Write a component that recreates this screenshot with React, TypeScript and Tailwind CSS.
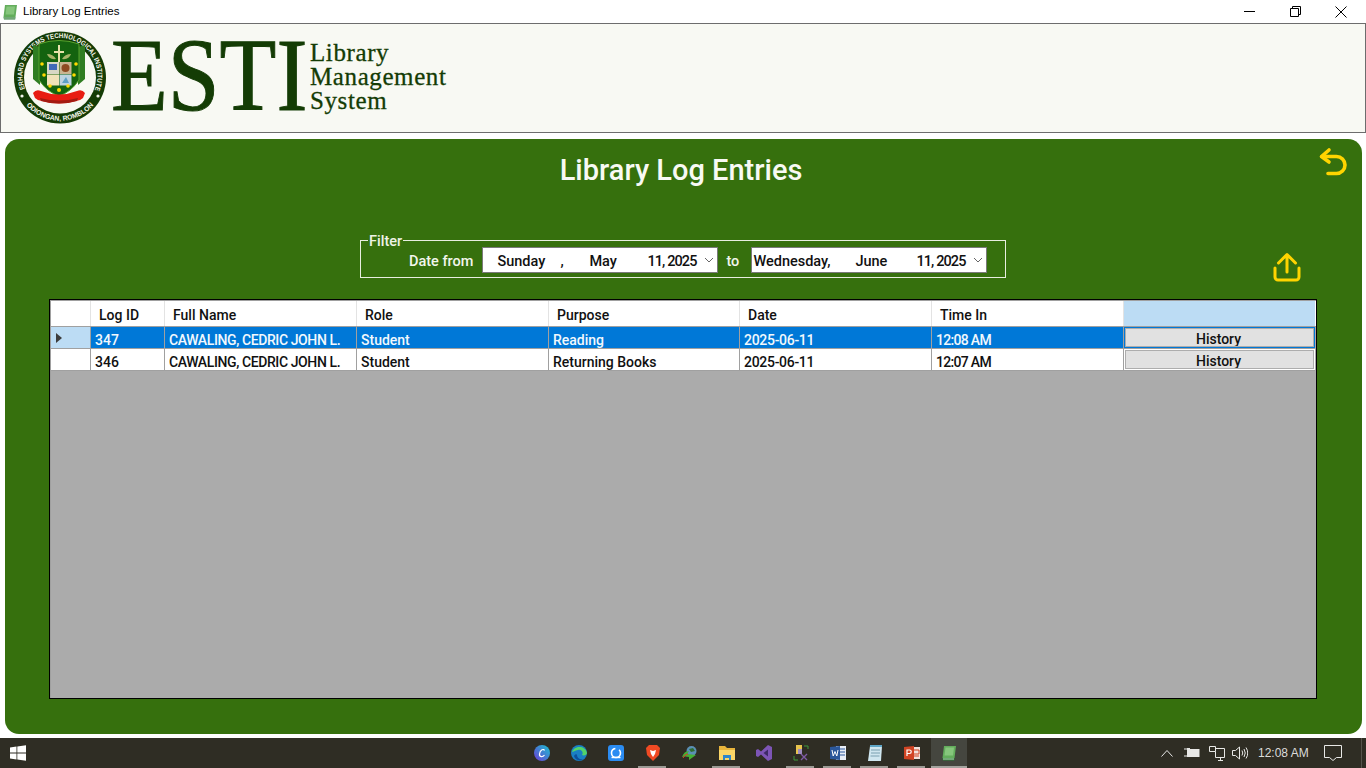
const COLUMNS = ["Log ID", "Full Name", "Role", "Purpose", "Date", "Time In"];

const ROWS = [
  { id: "347", name: "CAWALING, CEDRIC JOHN L.", role: "Student", purpose: "Reading", date: "2025-06-11", time: "12:08 AM", selected: true },
  { id: "346", name: "CAWALING, CEDRIC JOHN L.", role: "Student", purpose: "Returning Books", date: "2025-06-11", time: "12:07 AM", selected: false },
];

const GRID = "grid grid-cols-[40px_74px_192px_192px_191px_192px_192px_191px]";
const FONT = "font-['Roboto','Liberation_Sans',sans-serif]";

function BookIcon({ size = 16 }: { size?: number }) {
  return (
    <svg width={size} height={size} viewBox="0 0 16 16">
      <path d="M3 1h12l-1.500 12H1.500z" fill="#63ad5c" />
      <path d="M4.500 2.500h8.500l-1 8H3.500z" fill="#86c67c" />
      <path d="M1.500 13h12l-.3 2.500H2z" fill="#2f7d3a" />
      <path d="M2 14h11" stroke="#d8ecd4" strokeWidth="0.8" />
    </svg>
  );
}

function TitleBar() {
  return (
    <div className="flex h-[23px] items-center bg-white">
      <div className="ml-[2px] flex items-center">
        <BookIcon />
      </div>
      <span className="ml-[5px] pt-[1px] font-['Liberation_Sans',sans-serif] text-[11.5px] text-black">Library Log Entries</span>
      <div className="ml-auto mr-[2px] flex h-full">
        <div className="flex w-[46px] items-center justify-center">
          <svg width="11" height="11" viewBox="0 0 11 11"><path d="M0 5.500h11" stroke="#000" /></svg>
        </div>
        <div className="flex w-[46px] items-center justify-center">
          <svg width="11" height="11" viewBox="0 0 11 11" fill="none" stroke="#000"><path d="M.5 2.500h8v8h-8zM2.500 2.500v-2h8v8h-2" /></svg>
        </div>
        <div className="flex w-[46px] items-center justify-center">
          <svg width="12" height="12" viewBox="0 0 12 12" stroke="#000"><path d="M.5.5l11 11M11.500.5l-11 11" /></svg>
        </div>
      </div>
    </div>
  );
}

function Seal() {
  return (
    <svg width="96" height="94" viewBox="0 0 96 94">
      <defs>
        <path id="sealTop" d="M13 58A37.500 37.500 0 1 1 83 58" />
        <path id="sealBottom" d="M12 71A44 44 0 0 0 84 71" />
      </defs>
      <circle cx="48" cy="46.500" r="46" fill="#143c05" />
      <circle cx="48" cy="46.500" r="36" fill="#f8f9f3" />
      <text fill="#f4f6ec" fontSize="7" fontFamily="Liberation Sans" fontWeight="700">
        <textPath href="#sealTop" textLength="146" lengthAdjust="spacingAndGlyphs">ERHARD SYSTEMS TECHNOLOGICAL INSTITUTE</textPath>
      </text>
      <text fill="#f4f6ec" fontSize="7" fontFamily="Liberation Sans" fontWeight="700">
        <textPath href="#sealBottom" startOffset="4" textLength="76" lengthAdjust="spacingAndGlyphs">ODIONGAN, ROMBLON</textPath>
      </text>
      <circle cx="10" cy="65" r="1.600" fill="#f4f6ec" />
      <circle cx="86" cy="65" r="1.600" fill="#f4f6ec" />
      <g transform="translate(-1,-6)">
        <path d="M22 20l7 2v38l-7-6z" fill="#2f7d22" />
        <path d="M74 20l-7 2v38l7-6z" fill="#2f7d22" />
        <path d="M28 19q20-7 40 0v36q-8 12-20 16-12-4-20-16z" fill="#14630f" stroke="#59a52e" />
        <path d="M47 20h2v6h4v2h-4v9h-2v-9h-4v-2h4z" fill="#e8e2ab" />
        <path d="M36 29q6 0 9 5-7 1-9-5zM60 29q-6 0-9 5 7 1 9-5z" fill="#a9b46a" />
        <rect x="36" y="37" width="12" height="12" fill="#d8d7c4" />
        <rect x="48.500" y="37" width="12" height="12" fill="#c9b492" />
        <rect x="36" y="49.500" width="12" height="11" fill="#f0e2b8" />
        <rect x="48.500" y="49.500" width="12" height="11" fill="#bcd2e0" />
        <rect x="38" y="39" width="8" height="6" fill="#4169b8" />
        <circle cx="54.500" cy="43" r="4" fill="#8d4a22" />
        <path d="M51 58l4-6 3 6z" fill="#5d9fc4" />
        <g fill="#ffd900">
          <circle cx="31" cy="39" r="1.800" /><circle cx="65" cy="39" r="1.800" />
          <circle cx="33" cy="50" r="1.800" /><circle cx="63" cy="50" r="1.800" />
          <circle cx="39" cy="61" r="1.800" /><circle cx="57" cy="61" r="1.800" />
          <circle cx="48" cy="65" r="2" />
        </g>
        <g transform="translate(0,2)">
          <path d="M22 66q3-4 8-2 18 7 36 0 5-2 8 2l-2 5q-3 3-7 3-17 5-34 0-4 0-7-3z" fill="#e81c12" />
          <path d="M29 71q19 5 38 0l-1 3q-18 5-36 0z" fill="#a31b12" />
        </g>
      </g>
    </svg>
  );
}

function Header() {
  return (
    <div className="flex h-[110px] items-start border border-[#6d6d6d] bg-[#f8f9f3] pl-[11px] pt-[7px]">
      <Seal />
      <div className="ml-[3px] mt-[-8px] w-[194px]">
        <span className="inline-block origin-left scale-x-[0.895] font-['Liberation_Serif',serif] text-[104px] leading-[104px] text-[#143c05] [-webkit-text-stroke:1px_#143c05]">ESTI</span>
      </div>
      <div className="ml-[5px] mt-[10px] font-['Liberation_Serif',serif] text-[25px] leading-[24px] tracking-[0.6px] text-[#143c05] [-webkit-text-stroke:0.3px_#143c05]">
        <div>Library</div>
        <div>Management</div>
        <div>System</div>
      </div>
    </div>
  );
}

function DatePicker({ parts }: { parts: { text: string; className: string }[] }) {
  return (
    <div className="flex h-[26px] w-[236px] items-center border border-[#7a7a7a] bg-white pt-[3px] text-[14.500px] text-[#111]">
      {parts.map((p) => (
        <span key={p.text} className={p.className}>{p.text}</span>
      ))}
      <svg className="ml-auto mr-[3px] mt-[-3px]" width="10" height="10" viewBox="0 0 10 10" fill="none" stroke="#666">
        <path d="M1 3l4 4 4-4" />
      </svg>
    </div>
  );
}

function FilterBox() {
  return (
    <fieldset className="ml-[355px] h-[46px] w-[646px] border border-[#e8eee0] pl-[8px]">
      <legend className="ml-[-1px] translate-y-[2px] px-[1px] text-[14.500px] leading-[16px] text-[#eef3e6]">Filter</legend>
      <div className="mt-[-1px] flex items-center">
        <span className="ml-[40px] pt-[3px] text-[14.500px] text-[#f2f6ec]">Date from</span>
        <div className="ml-[9px]">
          <DatePicker
            parts={[
              { text: "Sunday", className: "ml-[14px] w-[63px]" },
              { text: ",", className: "w-[29px]" },
              { text: "May", className: "w-[58px]" },
              { text: "11, 2025", className: "tracking-[-0.9px]" },
            ]}
          />
        </div>
        <span className="ml-[8px] w-[25px] pt-[3px] text-[14.500px] text-[#f2f6ec]">to</span>
        <DatePicker
          parts={[
            { text: "Wednesday,", className: "ml-[1px] w-[102px]" },
            { text: "June", className: "w-[61px]" },
            { text: "11, 2025", className: "tracking-[-0.9px]" },
          ]}
        />
      </div>
    </fieldset>
  );
}

function LogTable() {
  return (
    <div className="ml-[44px] mt-[17px] h-[400px] w-[1268px] overflow-hidden border border-black bg-[#ababab] text-[14px]">
      <div className="h-full border-l border-t border-[#a0a0a0]">
        <div className={`${GRID} h-[26px] border-b border-[#a0a0a0] bg-white`}>
          <div className="border-r border-[#e3e3e3]" />
          {COLUMNS.map((c) => (
            <div key={c} className="flex items-center border-r border-[#e3e3e3] pl-[8px] pt-[3px] text-[#111]">{c}</div>
          ))}
          <div className="bg-[#bcdcf4]" />
        </div>
        {ROWS.map((r) => {
          const cell = `h-[22px] overflow-hidden whitespace-nowrap border-r border-b border-[#a0a0a0] pl-[4px] pt-[2px] leading-[22px] ${r.selected ? "bg-[#0078d7] text-[#f2f8fd]" : "bg-white text-[#111]"}`;
          return (
            <div key={r.id} className={GRID}>
              <div className={`flex h-[22px] items-center border-r border-b border-[#a0a0a0] pl-[5px] ${r.selected ? "bg-[#bcdcf4]" : "bg-white"}`}>
                {r.selected && (
                  <svg width="6" height="10" viewBox="0 0 6 10"><path d="M0 0l6 5-6 5z" fill="#3c3c3c" /></svg>
                )}
              </div>
              <div className={cell}>{r.id}</div>
              <div className={`${cell} tracking-[-0.4px]`}>{r.name}</div>
              <div className={cell}>{r.role}</div>
              <div className={cell}>{r.purpose}</div>
              <div className={`${cell} tracking-[-0.3px]`}>{r.date}</div>
              <div className={`${cell} tracking-[-0.7px]`}>{r.time}</div>
              <div className={`h-[22px] border-b border-[#a0a0a0] p-[1px] ${r.selected ? "bg-[#0078d7]" : "bg-white"}`}>
                <div className="h-[19px] overflow-hidden border border-[#adadad] bg-[#e1e1e1] pr-[2px] text-center leading-[21px] text-[#111]">History</div>
              </div>
            </div>
          );
        })}
      </div>
    </div>
  );
}

function MainPanel() {
  return (
    <div className={`${FONT} mx-[5px] mt-[6px] h-[595px] w-[1357px] rounded-[14px] bg-[#36700d] font-medium`}>
      <div className="grid h-[60px] grid-cols-[1fr_auto_1fr] pt-[11px]">
        <div />
        <h1 className="ml-[-5px] text-[29px] leading-[40px] font-medium text-[#f8faf4]">Library Log Entries</h1>
        <div className="flex justify-end pr-[12px]">
          <svg className="mt-[-3px]" width="32" height="32" viewBox="0 0 32 32" fill="none" stroke="#ffd400" strokeWidth="3.600" strokeLinecap="round" strokeLinejoin="round">
            <path d="M11 3L3.500 9.500 11 15" />
            <path d="M4 9.500h14.500a7.500 7.500 0 0 1 0 17H10" />
          </svg>
        </div>
      </div>
      <div className="mt-[33px] flex items-start">
        <FilterBox />
        <svg className="ml-[266px] mt-[20px]" width="30" height="30" viewBox="0 0 30 30" fill="none" stroke="#ffd400" strokeWidth="3" strokeLinecap="round" strokeLinejoin="round">
          <path d="M15 20V3M6.500 11L15 2.500 23.500 11" />
          <path d="M3 16v9a3 3 0 0 0 3 3h18a3 3 0 0 0 3-3v-9" />
        </svg>
      </div>
      <LogTable />
    </div>
  );
}

const TASK_ICONS: { key: string; line: string; node: React.ReactNode }[] = [
  { key: "canva", line: "", node: (<svg width="16" height="16" viewBox="0 0 16 16"><defs><linearGradient id="cv" x1="0" y1="1" x2="1" y2="0"><stop offset="0" stopColor="#6d3bd6" /><stop offset="1" stopColor="#19c2d0" /></linearGradient></defs><circle cx="8" cy="8" r="8" fill="url(#cv)" /><path d="M10.500 5.500C10 3.500 6 4.500 5.500 9c-.3 3 3 3.500 5 1" fill="none" stroke="#fff" strokeWidth="1.200" /></svg>) },
  { key: "edge", line: "", node: (<svg width="16" height="16" viewBox="0 0 16 16"><circle cx="8" cy="8" r="8" fill="#1a7fc4" /><path d="M1 7C3 1 14-.5 16 8c0 2-3 3-5 2 2-3-1-6-4-5-3 .5-5 2-6 2z" fill="#52d36b" /><path d="M6 10c0 3 3 5 6 4-3 3-8 1-9-3 1-2 3-2 3-1z" fill="#0c4f9c" /></svg>) },
  { key: "teamviewer", line: "", node: (<svg width="16" height="16" viewBox="0 0 16 16"><rect width="16" height="16" rx="3" fill="#2b8cf2" /><circle cx="8" cy="8" r="4.500" fill="none" stroke="#fff" strokeWidth="1.600" strokeDasharray="20 4" /><path d="M3.500 12.500h9" stroke="#fff" strokeWidth="1.400" /></svg>) },
  { key: "brave", line: "bg-[#9b9a94]", node: (<svg width="14" height="16" viewBox="0 0 14 16"><path d="M3 0h8l3 3-1 7-6 6-6-6-1-7z" fill="#f04a23" /><path d="M4 5l3 1 3-1-1 4-2 3-2-3z" fill="#fff" /></svg>) },
  { key: "idm", line: "", node: (<svg width="16" height="16" viewBox="0 0 16 16"><circle cx="9.500" cy="6" r="5" fill="#5b8fb5" /><path d="M7 4l4-1 2 3-4 1z" fill="#2f6d32" /><path d="M0 12q2-6 7-6l-2 3 9 1-7 5v-3q-4-1-7 0z" fill="#45b035" /><path d="M1 13q2-4 5-4" stroke="#e03a2a" fill="none" /></svg>) },
  { key: "explorer", line: "bg-[#9b9a94]", node: (<svg width="16" height="16" viewBox="0 0 16 16"><path d="M0 1h6l2 2h8v3H0z" fill="#e8b53c" /><path d="M0 5h16v10H0z" fill="#fbd667" /><path d="M4 10h8v5h-2v-2H6v2H4z" fill="#2f86c9" /></svg>) },
  { key: "vs", line: "", node: (<svg width="16" height="16" viewBox="0 0 16 16"><path d="M12 0l4 2v12l-4 2-7-6.500L2 12 0 11V5l2-1 3 2.500z" fill="#7d55b6" /><path d="M12 4.500L7.500 8l4.500 3.500z" fill="#3d2a66" /></svg>) },
  { key: "xampp", line: "bg-[#9b9a94]", node: (<svg width="16" height="16" viewBox="0 0 16 16"><path d="M3 0h6v9H3z" fill="#e8c44e" /><path d="M5 4h4v5H5z" fill="#9f8cc0" /><path d="M11 1h4v3M1 11v4h4" fill="none" stroke="#3f9a3a" /><path d="M8 9l6 6M14 9l-6 6" stroke="#7e5aa5" strokeWidth="1.400" /></svg>) },
  { key: "word", line: "bg-[#9b9a94]", node: (<svg width="16" height="16" viewBox="0 0 16 16"><rect x="6" y="1" width="10" height="14" fill="#e9eef6" /><path d="M10 4h5M10 7h5M10 10h5" stroke="#2b579a" /><path d="M0 2l10-1v14L0 14z" fill="#2b579a" /><path d="M2 5l1.200 6L5 6.500 6.800 11 8 5" stroke="#fff" fill="none" /></svg>) },
  { key: "notepad", line: "bg-[#9b9a94]", node: (<svg width="14" height="16" viewBox="0 0 14 16"><path d="M2 1h12l-1 15H0z" fill="#cfe6ef" /><path d="M2 0h12v2H2z" fill="#5ea6c7" /><path d="M3 5h9M3 8h9M2.500 11h9" stroke="#7aa0b0" /></svg>) },
  { key: "ppt", line: "bg-[#9b9a94]", node: (<svg width="16" height="16" viewBox="0 0 16 16"><rect x="6" y="2" width="10" height="12" fill="#f1e2dc" /><path d="M10 5h5v4h-5M10 11h5" stroke="#d04423" fill="none" /><path d="M0 2l10-1v14L0 14z" fill="#d04423" /><path d="M3 11V5h2.500a1.500 1.500 0 0 1 0 3.500H3" stroke="#fff" fill="none" strokeWidth="1.200" /></svg>) },
];

function Taskbar() {
  return (
    <div className="mt-[4px] flex h-[30px] bg-[#2f2d24] font-['Liberation_Sans',sans-serif]">
      <div className="flex w-[48px] items-center pl-[10px]">
        <svg width="16" height="16" viewBox="0 0 16 16" fill="#fff">
          <path d="M0 2.500l6.500-.9v6H0zM7.300 1.500L16 .2v7.400H7.300zM0 8.400h6.500v6L0 13.500zM7.300 8.400H16v7.400l-8.700-1.300z" />
        </svg>
      </div>
      <div className="ml-[475px] flex">
        {TASK_ICONS.map((t) => (
          <div key={t.key} className="relative flex w-[37px] items-center justify-center">
            {t.node}
            {t.line && <div className={`absolute bottom-0 left-[4px] h-[2px] w-[28px] ${t.line}`} />}
          </div>
        ))}
        <div className="relative ml-[1px] flex w-[36px] items-center justify-center bg-[#45463f]">
          <BookIcon />
          <div className="absolute bottom-0 left-0 h-[2px] w-full bg-[#a3a39e]" />
        </div>
      </div>
      <div className="ml-auto flex items-center text-[12px] text-[#e8e8e6]">
        <svg width="12" height="8" viewBox="0 0 12 8" fill="none" stroke="#e8e8e6"><path d="M.5 7.500L6 1.500l5.500 6" /></svg>
        <svg className="ml-[11px]" width="16" height="12" viewBox="0 0 16 12"><path d="M0 2h3M0 9h3" stroke="#e8e8e6" /><rect x="3" y="1" width="3" height="9" fill="#e8e8e6" /><rect x="5.500" y="2.500" width="9.500" height="7" fill="#e8e8e6" stroke="#e8e8e6" /></svg>
        <svg className="ml-[9px]" width="16" height="16" viewBox="0 0 16 16" fill="none" stroke="#e8e8e6"><path d="M.5 1.500h6v5h-6zM6.500 3.500h9v9h-9v-6M9 15.500h5M11.500 12.500v3" /></svg>
        <svg className="ml-[7px]" width="16" height="14" viewBox="0 0 16 14" fill="none" stroke="#e8e8e6"><path d="M.5 4.500h3l4-3.500v12l-4-3.500h-3zM10 4.500q1.500 2.500 0 5M12 3q2.500 4 0 8M14 1.500q3.500 5.500 0 11" /></svg>
        <span className="ml-[10px] w-[52px] whitespace-nowrap text-[#dcdcda]">12:08 AM</span>
        <svg className="ml-[14px]" width="18" height="16" viewBox="0 0 18 16" fill="none" stroke="#e8e8e6"><path d="M.5.500h17v12h-5l-3.500 3-3.500-3h-5z" /></svg>
        <div className="ml-[19px] mr-[4px] h-full w-[1px] bg-[#55544c]" />
      </div>
    </div>
  );
}

export default function App() {
  return (
    <div className="h-[768px] w-[1366px] overflow-hidden bg-white">
      <TitleBar />
      <Header />
      <MainPanel />
      <Taskbar />
    </div>
  );
}
